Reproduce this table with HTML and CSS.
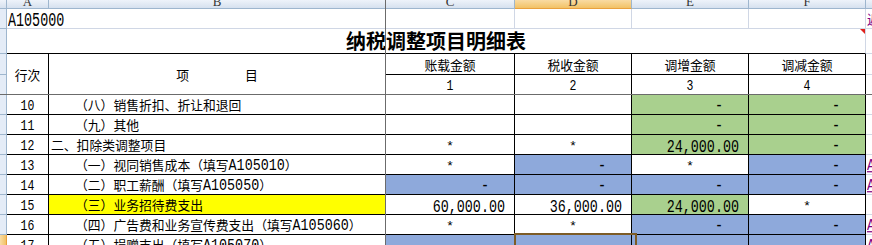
FILE: index.html
```html
<!DOCTYPE html>
<html lang="zh-CN">
<head>
<meta charset="utf-8">
<title>A105000 纳税调整项目明细表</title>
<link rel="stylesheet" href="styles.css">
</head>
<body>
<div class="sheet">
  <!-- column headers -->
  <div class="ch"></div>
  <div class="ch"><span>A</span></div>
  <div class="ch"><span>B</span></div>
  <div class="ch"><span>C</span></div>
  <div class="ch sel"><span>D</span></div>
  <div class="ch"><span>E</span></div>
  <div class="ch"><span>F</span></div>
  <div class="ch"><span>G</span></div>

  <!-- row 1 -->
  <div class="rh"></div>
  <div class="cell gl noright code"><span class="a big">A105000</span></div>
  <div class="cell gl"></div>
  <div class="cell gl"></div>
  <div class="cell gl"></div>
  <div class="cell gl"></div>
  <div class="cell gl"></div>
  <div class="cell gl link">返回目录</div>

  <!-- row 2 -->
  <div class="rh"></div>
  <div class="cell title">纳税调整项目明细表<span class="comment"></span></div>
  <div class="cell gl"></div>

  <!-- rows 3-4 -->
  <div class="rh"></div>
  <div class="cell tb merged">行次</div>
  <div class="cell tb merged item-head"><span>项</span><span>目</span></div>
  <div class="cell tb ctr head">账载金额</div>
  <div class="cell tb ctr head">税收金额</div>
  <div class="cell tb ctr head">调增金额</div>
  <div class="cell tb ctr head">调减金额</div>
  <div class="cell gl"></div>
  <div class="rh"></div>
  <div class="cell tb ctr"><span class="r">1</span></div>
  <div class="cell tb ctr"><span class="r">2</span></div>
  <div class="cell tb ctr"><span class="r">3</span></div>
  <div class="cell tb ctr"><span class="r">4</span></div>
  <div class="cell gl"></div>

  <!-- row 10 -->
  <div class="rh"></div>
  <div class="cell tb ctr"><span class="r">10</span></div>
  <div class="cell tb item">（八）销售折扣、折让和退回</div>
  <div class="cell tb"></div>
  <div class="cell tb"></div>
  <div class="cell tb green dash"><span class="n">-</span></div>
  <div class="cell tb green dash"><span class="n">-</span></div>
  <div class="cell gl"></div>

  <!-- row 11 -->
  <div class="rh"></div>
  <div class="cell tb ctr"><span class="r">11</span></div>
  <div class="cell tb item">（九）其他</div>
  <div class="cell tb"></div>
  <div class="cell tb"></div>
  <div class="cell tb green dash"><span class="n">-</span></div>
  <div class="cell tb green dash"><span class="n">-</span></div>
  <div class="cell gl"></div>

  <!-- row 12 -->
  <div class="rh"></div>
  <div class="cell tb ctr"><span class="r">12</span></div>
  <div class="cell tb item0">二、扣除类调整项目</div>
  <div class="cell tb ctr"><span class="s">*</span></div>
  <div class="cell tb ctr"><span class="s">*</span></div>
  <div class="cell tb green num"><span class="n">24,000.00</span></div>
  <div class="cell tb green dash"><span class="n">-</span></div>
  <div class="cell gl"></div>

  <!-- row 13 -->
  <div class="rh"></div>
  <div class="cell tb ctr"><span class="r">13</span></div>
  <div class="cell tb item">（一）视同销售成本（填写<span class="a">A105010</span>）</div>
  <div class="cell tb ctr"><span class="s">*</span></div>
  <div class="cell tb blue dash"><span class="n">-</span></div>
  <div class="cell tb ctr"><span class="s">*</span></div>
  <div class="cell tb blue dash"><span class="n">-</span></div>
  <div class="cell gl link"><span class="a u">A105010</span></div>

  <!-- row 14 -->
  <div class="rh"></div>
  <div class="cell tb ctr"><span class="r">14</span></div>
  <div class="cell tb item">（二）职工薪酬（填写<span class="a">A105050</span>）</div>
  <div class="cell tb blue dash"><span class="n">-</span></div>
  <div class="cell tb blue dash"><span class="n">-</span></div>
  <div class="cell tb blue dash"><span class="n">-</span></div>
  <div class="cell tb blue dash"><span class="n">-</span></div>
  <div class="cell gl link"><span class="a u">A105050</span></div>

  <!-- row 15 -->
  <div class="rh"></div>
  <div class="cell tb ctr"><span class="r">15</span></div>
  <div class="cell tb item yellow">（三）业务招待费支出</div>
  <div class="cell tb num"><span class="n">60,000.00</span></div>
  <div class="cell tb num"><span class="n">36,000.00</span></div>
  <div class="cell tb green num"><span class="n">24,000.00</span></div>
  <div class="cell tb ctr"><span class="s">*</span></div>
  <div class="cell gl"></div>

  <!-- row 16 -->
  <div class="rh"></div>
  <div class="cell tb ctr"><span class="r">16</span></div>
  <div class="cell tb item">（四）广告费和业务宣传费支出（填写<span class="a">A105060</span>）</div>
  <div class="cell tb ctr"><span class="s">*</span></div>
  <div class="cell tb ctr"><span class="s">*</span></div>
  <div class="cell tb blue dash"><span class="n">-</span></div>
  <div class="cell tb blue dash"><span class="n">-</span></div>
  <div class="cell gl link"><span class="a u">A105060</span></div>

  <!-- row 17 -->
  <div class="rh sel"></div>
  <div class="cell tb ctr"><span class="r">17</span></div>
  <div class="cell tb item">（五）捐赠支出（填写<span class="a">A105070</span>）</div>
  <div class="cell tb blue"></div>
  <div class="cell tb blue active"></div>
  <div class="cell tb blue"></div>
  <div class="cell tb blue"></div>
  <div class="cell gl link"><span class="a u">A105070</span></div>

  <div class="freeze-v"></div>
  <div class="freeze-h"></div>
</div>
</body>
</html>
```
FILE: styles.css
```css
* {
  box-sizing: border-box;
  margin: 0;
  padding: 0;
}

html,
body {
  background: #ffffff;
}

body {
  overflow: hidden;
  font-family: "Noto Sans CJK SC", sans-serif;
  font-size: 12.8px;
  color: #000000;
}

.sheet {
  position: relative;
  width: 872px;
  height: 245px;
  overflow: hidden;
  display: grid;
  grid-template-columns: 7px 42px 337px 129px 117px 117px 117px 80px;
  grid-template-rows: 9px 20px 25px 21px 20px repeat(8, 20px);
}

/* column headers */
.ch {
  border-right: 1px solid #9eb6ce;
  border-bottom: 1px solid #9eb6ce;
  background: linear-gradient(#eef3fa, #d6e1ef);
  overflow: hidden;
  display: flex;
  justify-content: center;
  align-items: flex-end;
  font: 13px/13px "Liberation Serif", serif;
  color: #333333;
}

.ch.sel {
  background: linear-gradient(#f9dba3, #f2c266);
  border-bottom-color: #e9a13e;
}

/* row headers */
.rh {
  border-right: 1px solid #9eb6ce;
  border-bottom: 1px solid #9eb6ce;
  background: #e4ecf7;
}

.rh.sel {
  background: linear-gradient(90deg, #f9dba3, #f2c266);
  border-right-color: #e9a13e;
}

/* cells */
.cell {
  border-right: 1px solid transparent;
  border-bottom: 1px solid transparent;
  line-height: 19px;
  white-space: nowrap;
  overflow: hidden;
}

.gl {
  border-right-color: #d0d7e5;
  border-bottom-color: #d0d7e5;
}

.tb {
  border-right-color: #000000;
  border-bottom-color: #000000;
}

.noright {
  border-right-color: transparent;
  overflow: visible;
}

.code {
  padding-left: 1px;
  padding-top: 2px;
}

.title {
  grid-column: 2 / span 6;
  position: relative;
  border-right-color: #d0d7e5;
  border-bottom-color: #000000;
  text-align: center;
  font-size: 20px;
  font-weight: 700;
  line-height: 24px;
}

.comment {
  position: absolute;
  top: 0;
  right: 0;
  width: 0;
  height: 0;
  border-left: 5px solid transparent;
  border-top: 5px solid #e0201b;
}

.merged {
  grid-row: span 2;
  display: flex;
  align-items: center;
  justify-content: center;
}

.item-head {
  gap: 56px;
}

.head {
  line-height: 20px;
  padding-top: 1px;
}

.ctr {
  text-align: center;
}

.item {
  padding-left: 26px;
}

.item0 {
  padding-left: 2px;
}

.num {
  text-align: right;
  padding-right: 9px;
  padding-top: 2px;
}

.dash {
  text-align: right;
  padding-right: 25px;
  padding-top: 1px;
}

.green {
  background: #a9d08e;
}

.blue {
  background: #8ea9db;
}

.yellow {
  background: #ffff00;
}

.link {
  padding-left: 1px;
  color: #800080;
}

.u {
  text-decoration: underline;
}

/* ascii text styles */
.a,
.n,
.r,
.s {
  display: inline-block;
  font-family: "Liberation Mono", monospace;
  line-height: 1;
  transform-origin: 50% 77%;
}

.a {
  font-size: 13.4px;
  transform: scaleY(1.2);
}

.a.big {
  transform: scaleY(1.5);
}

.n {
  font-size: 13.4px;
  transform: scaleY(1.4);
}

.r {
  font-size: 11.5px;
  transform: scaleY(1.3);
}

.s {
  font-size: 13.4px;
}

/* active cell */
.active {
  position: relative;
  overflow: visible;
}

.active::after {
  content: "";
  position: absolute;
  left: -1px;
  top: -2px;
  width: 119px;
  height: 24px;
  border: 2px solid #7d5c26;
}

/* freeze panes */
.freeze-v {
  position: absolute;
  left: 385px;
  top: 0;
  width: 1px;
  height: 245px;
  background: #6b6b6b;
}

.freeze-h {
  position: absolute;
  left: 0;
  top: 94px;
  width: 872px;
  height: 1px;
  background: #6b6b6b;
}
```
